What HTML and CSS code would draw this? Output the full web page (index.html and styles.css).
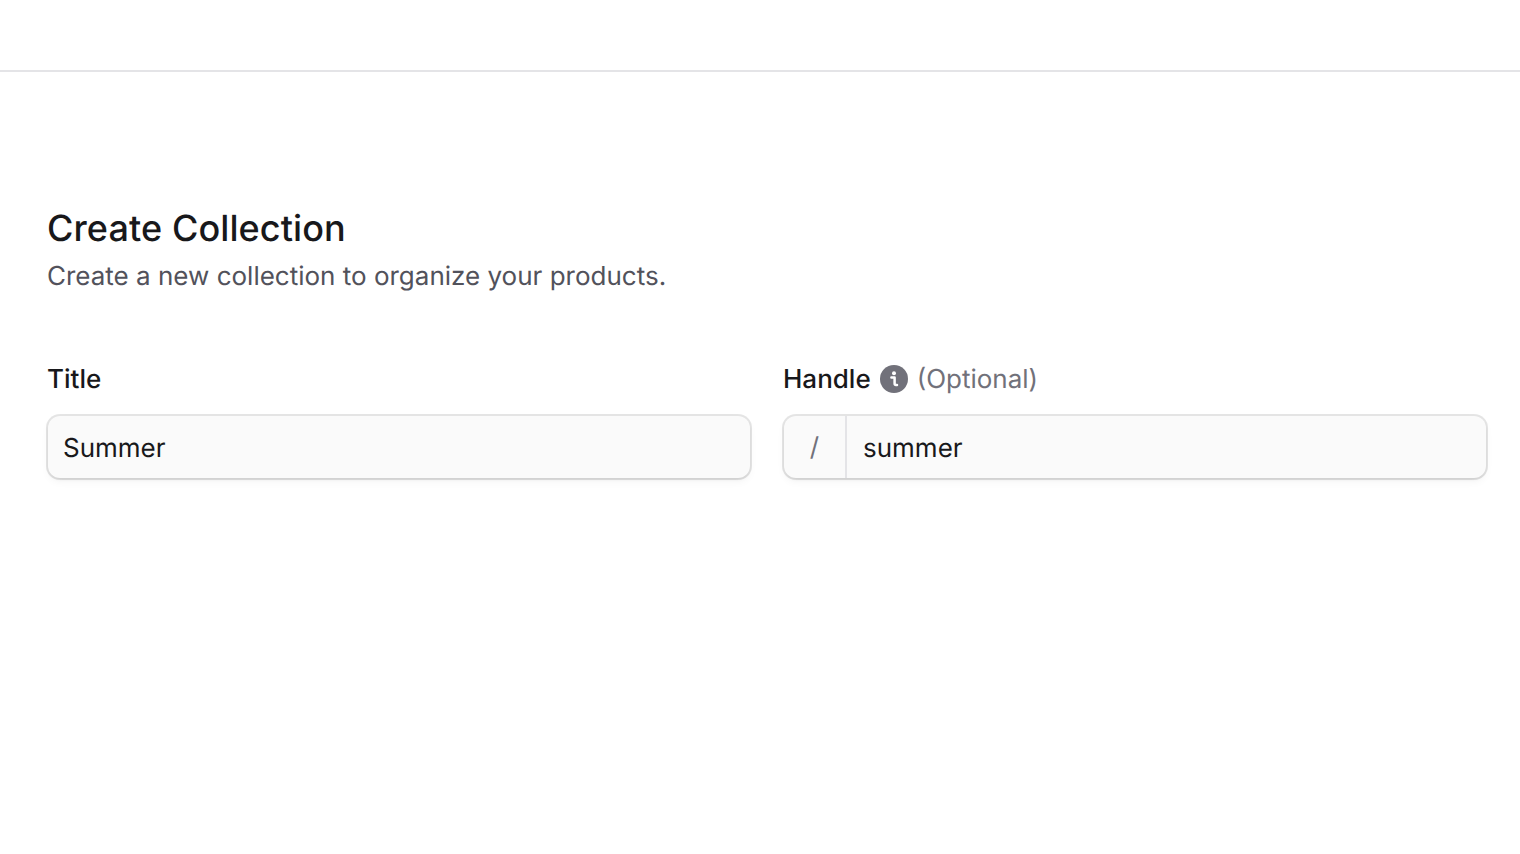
FILE: index.html
```html
<!DOCTYPE html>
<html lang="en">
<head>
<meta charset="utf-8">
<title>Create Collection</title>
<link rel="stylesheet" href="styles.css">
</head>
<body>
<header class="topbar"></header>
<main class="page">
  <h1 class="title">Create Collection</h1>
  <p class="subtitle">Create a new collection to organize your products.</p>
  <div class="fields">
    <div class="field">
      <div class="label"><span>Title</span></div>
      <div class="input"><span class="value">Summer</span></div>
    </div>
    <div class="field">
      <div class="label">
        <span>Handle</span>
        <svg class="info" width="28" height="28" viewBox="0 0 28 28" aria-hidden="true"><circle cx="14" cy="14" r="14" fill="#71717a"/><circle cx="14" cy="8.3" r="2" fill="#fff"/><path d="M11.4 12.6h3.2v6q0 1.4 1.4 1.4h1" fill="none" stroke="#fff" stroke-width="2.5" stroke-linecap="round" stroke-linejoin="round"/></svg>
        <span class="optional">(Optional)</span>
      </div>
      <div class="input">
        <span class="prefix">/</span>
        <span class="value">summer</span>
      </div>
    </div>
  </div>
</main>
</body>
</html>
```
FILE: styles.css
```css
* { box-sizing: border-box; }
html, body { margin: 0; height: 100%; }
body {
  background: #fff;
  color: #18181b;
  font-family: Inter, "Liberation Sans", sans-serif;
  text-rendering: geometricPrecision;
  overflow: hidden;
}
.topbar {
  height: 72px;
  border-bottom: 2px solid #e4e4e7;
}
.page {
  padding: 132px 33px 0 47px;
}
.title {
  margin: 0;
  font-size: 36px;
  line-height: 48px;
  font-weight: 480;
  letter-spacing: .1px;
}
.subtitle {
  margin: 1px 0 0;
  height: 48px;
  font-size: 26px;
  line-height: 48px;
  color: #52525b;
}
.fields {
  margin-top: 60px;
  display: grid;
  grid-template-columns: 704px 704px;
  gap: 32px;
}
.label {
  display: flex;
  align-items: center;
  height: 36px;
  margin-bottom: 19px;
  font-size: 26px;
  font-weight: 480;
}
.info { margin-left: 9px; margin-right: 9px; }
.optional { color: #71717a; font-weight: 400; }
.input {
  display: flex;
  align-items: center;
  height: 62px;
  margin-left: 1px;
  width: 702px;
  background: #fafafa;
  border-radius: 12px;
  box-shadow: 0 0 0 2px rgba(0,0,0,.1), 0 2px 4px -2px rgba(0,0,0,.14), 0 4px 8px rgba(0,0,0,.04);
  font-size: 26px;
}
.value { padding: 2px 0 0 15px; }
.prefix {
  width: 63px;
  height: 100%;
  flex: none;
  display: flex;
  align-items: center;
  justify-content: center;
  border-right: 2px solid #e4e4e7;
  color: #71717a;
}
.prefix + .value { padding-left: 16px; }
```
